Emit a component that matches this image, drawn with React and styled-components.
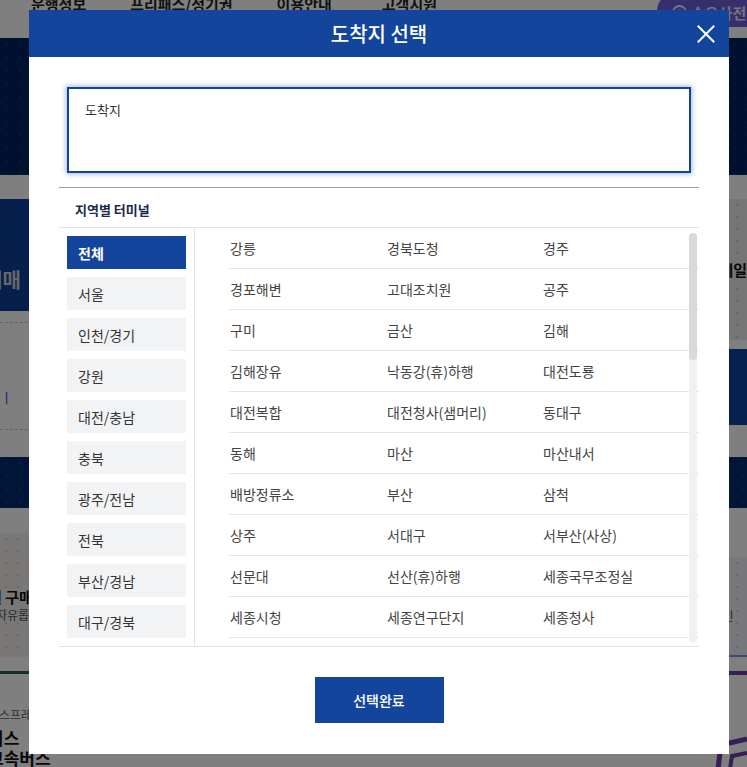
import React from "react";
import styled, { createGlobalStyle } from "styled-components";

const GlobalStyle = createGlobalStyle`
  html, body { margin: 0; padding: 0; background: #fff; }
  body { font-family: "Noto Sans CJK KR", "Noto Sans", sans-serif; overflow: hidden; }
  * { box-sizing: border-box; }
`;

/* ---------- background page ---------- */
const Page = styled.div`
  width: 747px;
  height: 767px;
  overflow: hidden;
  background: #fff;
`;

const TopNav = styled.div`
  height: 38px;
  display: flex;
  align-items: flex-start;
  padding-left: 31px;
`;

const NavItem = styled.span`
  font-size: 15px;
  font-weight: 700;
  color: #222;
  line-height: 20px;
  margin-top: -6px;
  margin-right: ${(p) => p.$gap}px;
  white-space: nowrap;
`;

const Pill = styled.div`
  margin-left: auto;
  margin-top: -6px;
  height: 33px;
  width: 90px;
  border-radius: 17px 0 0 17px;
  background: #6f5cd8;
  display: flex;
  align-items: center;
  gap: 4px;
  padding: 4px 0 0 15px;
  color: #e8e4ff;
  font-size: 15px;
  font-weight: 700;
  white-space: nowrap;
`;

const PillIcon = styled.span`
  width: 15px;
  height: 15px;
  border: 2px solid #e8e4ff;
  border-radius: 50%;
  font-size: 10px;
  line-height: 11px;
  text-align: center;
`;

const Band = styled.div`
  height: ${(p) => p.$h}px;
  background-color: ${(p) => p.$bg || "#fff"};
  background-image: ${(p) =>
    p.$dots ? "radial-gradient(rgba(120,150,220,0.28) 0.8px, transparent 1.1px)" : "none"};
  background-size: 13px 13px;
`;

const Columns = styled.div`
  display: grid;
  grid-template-columns: 1fr 1fr;
`;

const Col = styled.div`
  display: flex;
  flex-direction: column;
`;

const PromoBand = styled(Band)`
  display: flex;
  align-items: center;
  padding-top: 48px;
  color: #cfcfcf;
  font-size: 20px;
  font-weight: 700;
  text-indent: -16px;
  overflow: hidden;
  white-space: nowrap;
`;

const DashedBox = styled.div`
  height: 146px;
  padding-top: 11px;
`;

const DashedInner = styled.div`
  height: 108px;
  border-top: 1px dashed #c8c8c8;
  border-bottom: 1px dashed #c8c8c8;
  display: flex;
  align-items: center;
  padding-top: 42px;
  color: #2b5bd8;
  font-size: 14px;
`;

const Panel = styled.div`
  height: ${(p) => p.$h}px;
  background-color: ${(p) => p.$bg || "#f3f0ed"};
  background-image: radial-gradient(rgba(200, 120, 110, 0.3) 0.8px, transparent 1.1px);
  background-size: 12px 12px;
  display: flex;
  flex-direction: column;
  justify-content: ${(p) => p.$justify || "center"};
  padding: ${(p) => p.$pad || "0"};
  overflow: hidden;
  white-space: nowrap;
  border-bottom: ${(p) => p.$line || "none"};
`;

const PanelTitle = styled.span`
  font-size: 15px;
  font-weight: 700;
  color: #111;
  line-height: 20px;
  text-indent: ${(p) => p.$indent || 0}px;
`;

const PanelSub = styled.span`
  font-size: 12px;
  color: #555;
  line-height: 16px;
  text-indent: ${(p) => p.$indent || 0}px;
`;

const Rule = styled.div`
  height: ${(p) => p.$h}px;
  background: ${(p) => p.$bg};
  margin-top: ${(p) => p.$mt || 0}px;
`;

const FooterText = styled.div`
  display: flex;
  flex-direction: column;
  padding-top: 33px;
  white-space: nowrap;
  overflow: hidden;
`;

const SmallGray = styled.span`
  font-size: 12px;
  color: #666;
  text-indent: -12px;
  line-height: 16px;
  margin-bottom: 5px;
`;

const BigBold = styled.span`
  font-size: 17px;
  font-weight: 700;
  color: #111;
  line-height: 20px;
  text-indent: -12px;
`;

const Shapes = styled.div`
  display: flex;
  justify-content: flex-end;
  padding-top: 50px;
`;

const Overlay = styled.div`
  position: fixed;
  inset: 0;
  background: rgba(0, 0, 0, 0.5);
`;

/* ---------- modal ---------- */
const Modal = styled.div`
  position: fixed;
  top: 10px;
  left: 29px;
  width: 700px;
  height: 744px;
  background: #fff;
  display: flex;
  flex-direction: column;
`;

const Header = styled.div`
  height: 47px;
  background: #12459b;
  display: grid;
  grid-template-columns: 1fr auto 1fr;
  align-items: center;
`;

const Title = styled.h2`
  grid-column: 2;
  margin: 0;
  color: #fff;
  font-size: 20px;
  font-weight: 500;
`;

const CloseBtn = styled.button`
  grid-column: 3;
  justify-self: end;
  margin-right: 13px;
  width: 20px;
  height: 20px;
  padding: 0;
  border: 0;
  background: transparent;
  display: flex;
  align-items: center;
  justify-content: center;
  cursor: pointer;
`;

const Body = styled.div`
  padding: 30px 30px 0;
  display: flex;
  flex-direction: column;
`;

const InputBox = styled.div`
  margin: 0 8px;
  height: 86px;
  border: 2px solid #12449a;
  box-shadow: 0 0 5px 1px rgba(18, 69, 154, 0.4);
  padding: 12px 0 0 16px;
  font-size: 13px;
  color: #333;
  line-height: 18px;
`;

const Divider = styled.div`
  margin-top: 14px;
  height: 1px;
  background: #9c9c9c;
`;

const SectionTitle = styled.div`
  height: 40px;
  padding: 13px 0 0 16px;
  font-size: 13px;
  font-weight: 700;
  color: #1b2a4e;
  line-height: 18px;
  border-bottom: 1px solid #e3e3e3;
`;

const Content = styled.div`
  height: 419px;
  display: flex;
  border-bottom: 1px solid #e3e3e3;
`;

const RegionCol = styled.div`
  width: 136px;
  flex: none;
  padding: 8px 8px 0 8px;
  border-right: 1px solid #e3e3e3;
  display: flex;
  flex-direction: column;
  gap: 8px;
`;

const RegionBtn = styled.div`
  height: 33px;
  padding-left: 11px;
  display: flex;
  align-items: center;
  font-size: 14px;
  background: ${(p) => (p.$active ? "#12459b" : "#f2f3f5")};
  color: ${(p) => (p.$active ? "#fff" : "#333")};
  font-weight: ${(p) => (p.$active ? 700 : 400)};
`;

const ListWrap = styled.div`
  flex: 1;
  position: relative;
  height: 418px;
`;

const ListScroll = styled.div`
  height: 418px;
  overflow-y: scroll;
  padding-left: 34px;
  scrollbar-width: none;
  &::-webkit-scrollbar {
    display: none;
  }
`;

const Track = styled.div`
  position: absolute;
  right: 2px;
  top: 5px;
  bottom: 3px;
  width: 8px;
  border-radius: 4px;
  background: #f1f1f1;
`;

const Thumb = styled.div`
  width: 8px;
  border-radius: 4px;
  background: #d9d9d9;
`;

const Row = styled.div`
  display: grid;
  grid-template-columns: 157px 156px 1fr;
  height: 41px;
  border-bottom: 1px solid #e5e5e5;
  align-items: center;
`;

const Cell = styled.span`
  padding-left: 1px;
  font-size: 14px;
  color: #444;
  white-space: nowrap;
`;

const Footer = styled.div`
  display: flex;
  justify-content: center;
  padding-top: 30px;
`;

const DoneBtn = styled.button`
  width: 129px;
  height: 46px;
  border: 0;
  background: #12459b;
  color: #fff;
  font-family: "Noto Sans CJK KR", sans-serif;
  font-size: 14px;
  font-weight: 500;
  cursor: pointer;
`;

const regions = [
  "전체", "서울", "인천/경기", "강원", "대전/충남", "충북", "광주/전남", "전북", "부산/경남", "대구/경북",
];

const terminals = [
  "강릉", "경북도청", "경주",
  "경포해변", "고대조치원", "공주",
  "구미", "금산", "김해",
  "김해장유", "낙동강(휴)하행", "대전도룡",
  "대전복합", "대전청사(샘머리)", "동대구",
  "동해", "마산", "마산내서",
  "배방정류소", "부산", "삼척",
  "상주", "서대구", "서부산(사상)",
  "선문대", "선산(휴)하행", "세종국무조정실",
  "세종시청", "세종연구단지", "세종청사",
  "세종터미널", "센트럴시티(서울)", "속초",
  "수원", "순천", "순천신대지구",
  "아산온천", "안동", "안산",
  "양산", "양재", "여수",
  "여주", "영덕", "영주",
  "영천", "오산", "오송",
  "옥천", "온양", "완도",
  "용인", "울산", "울산신복",
  "원주", "유성", "의정부",
  "이천", "익산", "인천",
  "인천공항T1", "인천공항T2", "장성",
  "전주", "전주호남제일문", "정안(휴)상행",
  "정안(휴)하행", "정읍", "제천",
  "제천하소", "진주", "진주개양",
  "창원", "창원역", "천안",
  "청주", "청주공항", "춘천",
  "충주", "태백", "통영",
  "평택", "포항", "포항시청",
  "하남", "함평", "해운대",
  "홍성", "화성", "황간",
  "효천", "동서울", "서울경부",
  "천안아산역", "청양", "태안",
  "합천", "해남", "홍천",
];

const rows = [];
for (let i = 0; i < terminals.length; i += 3) rows.push(terminals.slice(i, i + 3));

const VIEW_H = 418;
const TRACK_H = 410;
const contentH = rows.length * 41;
const thumbH = Math.round((VIEW_H / contentH) * TRACK_H);

export default function App() {
  return (
    <>
      <GlobalStyle />
      <Page>
        <TopNav>
          <NavItem $gap={44}>운행정보</NavItem>
          <NavItem $gap={44}>프리패스/정기권</NavItem>
          <NavItem $gap={50}>이용안내</NavItem>
          <NavItem $gap={0}>고객지원</NavItem>
          <Pill>
            <PillIcon>!</PillIcon>
            수요사전
          </Pill>
        </TopNav>
        <Band $h={137} $bg="#00225e" $dots />
        <Band $h={24} />
        <Columns>
          <Col>
            <PromoBand $h={112} $bg="#0e3e9a">예매</PromoBand>
            <DashedBox>
              <DashedInner>ㅣ</DashedInner>
            </DashedBox>
            <Band $h={51} $bg="#022c6e" $dots />
            <Band $h={25} />
            <Panel $h={124} $pad="54px 0 0" $justify="flex-start">
              <PanelTitle $indent={-12}>권 구매</PanelTitle>
              <PanelSub $indent={-4}>자유롭게</PanelSub>
            </Panel>
            <Rule $h={3} $bg="#2f5a52" $mt={14} />
            <FooterText>
              <SmallGray>익스프레스</SmallGray>
              <BigBold>비스</BigBold>
              <BigBold>고속버스</BigBold>
            </FooterText>
          </Col>
          <Col>
            <Panel $h={141} $bg="#ebeaea" $pad="0 0 0 360px">
              <PanelTitle>세일</PanelTitle>
            </Panel>
            <Band $h={9} />
            <Band $h={76} $bg="#0c429e" />
            <Band $h={32} />
            <Band $h={51} $bg="#022c6e" $dots />
            <Band $h={49} />
            <Panel $h={100} $bg="#eef0f6" $pad="20px 0 0 352px" $line="2px solid #7a96d8">
              <PanelSub>확인</PanelSub>
            </Panel>
            <Rule $h={4} $bg="#6a3ca8" $mt={14} />
            <Shapes>
              <svg width="32" height="44" viewBox="0 0 32 44">
                <path d="M3 44 L6 20 L32 14" stroke="#6a3ca8" strokeWidth="5" fill="none" />
                <path d="M15 44 L17 31 L32 28" stroke="#6a3ca8" strokeWidth="4" fill="none" />
              </svg>
            </Shapes>
          </Col>
        </Columns>
      </Page>
      <Overlay />
      <Modal role="dialog" aria-label="도착지 선택">
        <Header>
          <Title>도착지 선택</Title>
          <CloseBtn aria-label="닫기">
            <svg width="18" height="18" viewBox="0 0 18 18">
              <path d="M1.5 1.5 L16.5 16.5 M16.5 1.5 L1.5 16.5" stroke="#fff" strokeWidth="2" strokeLinecap="square" />
            </svg>
          </CloseBtn>
        </Header>
        <Body>
          <InputBox>도착지</InputBox>
          <Divider />
          <SectionTitle>지역별 터미널</SectionTitle>
          <Content>
            <RegionCol>
              {regions.map((r, i) => (
                <RegionBtn key={r} $active={i === 0}>
                  {r}
                </RegionBtn>
              ))}
            </RegionCol>
            <ListWrap>
              <ListScroll>
                {rows.map((row, i) => (
                  <Row key={i}>
                    {row.map((t) => (
                      <Cell key={t}>{t}</Cell>
                    ))}
                  </Row>
                ))}
              </ListScroll>
              <Track aria-hidden="true">
                <Thumb style={{ height: thumbH }} />
              </Track>
            </ListWrap>
          </Content>
          <Footer>
            <DoneBtn>선택완료</DoneBtn>
          </Footer>
        </Body>
      </Modal>
    </>
  );
}
